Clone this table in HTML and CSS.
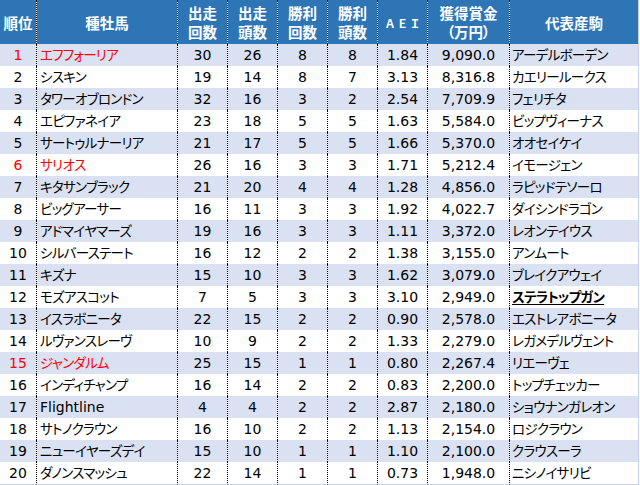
FILE: index.html
```html
<!DOCTYPE html>
<html lang="ja">
<head>
<meta charset="utf-8">
<title>種牡馬ランキング</title>
<link rel="stylesheet" href="styles.css">
</head>
<body>
<table class="rank">
  <colgroup>
    <col class="w-rank"><col class="w-name"><col class="w-num"><col class="w-num"><col class="w-num"><col class="w-num"><col class="w-num"><col class="w-prize"><col class="w-rep">
  </colgroup>
  <thead>
    <tr>
      <th>順位</th>
      <th>種牡馬</th>
      <th>出走<br>回数</th>
      <th>出走<br>頭数</th>
      <th>勝利<br>回数</th>
      <th>勝利<br>頭数</th>
      <th><span class="aei">ＡＥＩ</span></th>
      <th>獲得賞金<br>（万円）</th>
      <th>代表産駒</th>
    </tr>
  </thead>
  <tbody>
    <tr class="hl"><td>1</td><td class="l">エフフォーリア</td><td>30</td><td>26</td><td>8</td><td>8</td><td>1.84</td><td>9,090.0</td><td class="l">アーデルボーデン</td></tr>
    <tr><td>2</td><td class="l">シスキン</td><td>19</td><td>14</td><td>8</td><td>7</td><td>3.13</td><td>8,316.8</td><td class="l">カエリールークス</td></tr>
    <tr><td>3</td><td class="l">タワーオブロンドン</td><td>32</td><td>16</td><td>3</td><td>2</td><td>2.54</td><td>7,709.9</td><td class="l">フェリチタ</td></tr>
    <tr><td>4</td><td class="l">エピファネイア</td><td>23</td><td>18</td><td>5</td><td>5</td><td>1.63</td><td>5,584.0</td><td class="l">ビップヴィーナス</td></tr>
    <tr><td>5</td><td class="l">サートゥルナーリア</td><td>21</td><td>17</td><td>5</td><td>5</td><td>1.66</td><td>5,370.0</td><td class="l">オオセイケイ</td></tr>
    <tr class="hl"><td>6</td><td class="l">サリオス</td><td>26</td><td>16</td><td>3</td><td>3</td><td>1.71</td><td>5,212.4</td><td class="l">イモージェン</td></tr>
    <tr><td>7</td><td class="l">キタサンブラック</td><td>21</td><td>20</td><td>4</td><td>4</td><td>1.28</td><td>4,856.0</td><td class="l">ラピッドテソーロ</td></tr>
    <tr><td>8</td><td class="l">ビッグアーサー</td><td>16</td><td>11</td><td>3</td><td>3</td><td>1.92</td><td>4,022.7</td><td class="l">ダイシンドラゴン</td></tr>
    <tr><td>9</td><td class="l">アドマイヤマーズ</td><td>19</td><td>16</td><td>3</td><td>3</td><td>1.11</td><td>3,372.0</td><td class="l">レオンテイウス</td></tr>
    <tr><td>10</td><td class="l">シルバーステート</td><td>16</td><td>12</td><td>2</td><td>2</td><td>1.38</td><td>3,155.0</td><td class="l">アンムート</td></tr>
    <tr><td>11</td><td class="l">キズナ</td><td>15</td><td>10</td><td>3</td><td>3</td><td>1.62</td><td>3,079.0</td><td class="l">ブレイクアウェイ</td></tr>
    <tr><td>12</td><td class="l">モズアスコット</td><td>7</td><td>5</td><td>3</td><td>3</td><td>3.10</td><td>2,949.0</td><td class="l"><span class="star">ステラトップガン</span></td></tr>
    <tr><td>13</td><td class="l">イスラボニータ</td><td>22</td><td>15</td><td>2</td><td>2</td><td>0.90</td><td>2,578.0</td><td class="l">エストレアボニータ</td></tr>
    <tr><td>14</td><td class="l">ルヴァンスレーヴ</td><td>10</td><td>9</td><td>2</td><td>2</td><td>1.33</td><td>2,279.0</td><td class="l">レガメデルヴェント</td></tr>
    <tr class="hl"><td>15</td><td class="l">ジャンダルム</td><td>25</td><td>15</td><td>1</td><td>1</td><td>0.80</td><td>2,267.4</td><td class="l">リエーヴェ</td></tr>
    <tr><td>16</td><td class="l">インディチャンプ</td><td>16</td><td>14</td><td>2</td><td>2</td><td>0.83</td><td>2,200.0</td><td class="l">トップチェッカー</td></tr>
    <tr><td>17</td><td class="l latin">Flightline</td><td>4</td><td>4</td><td>2</td><td>2</td><td>2.87</td><td>2,180.0</td><td class="l">ショウナンガレオン</td></tr>
    <tr><td>18</td><td class="l">サトノクラウン</td><td>16</td><td>10</td><td>2</td><td>2</td><td>1.13</td><td>2,154.0</td><td class="l">ロジクラウン</td></tr>
    <tr><td>19</td><td class="l">ニューイヤーズデイ</td><td>15</td><td>10</td><td>1</td><td>1</td><td>1.10</td><td>2,100.0</td><td class="l">クラウスーラ</td></tr>
    <tr><td>20</td><td class="l">ダノンスマッシュ</td><td>22</td><td>14</td><td>1</td><td>1</td><td>0.73</td><td>1,948.0</td><td class="l">ニシノイサリビ</td></tr>
  </tbody>
</table>
</body>
</html>
```

FILE: styles.css
```css
html, body {
  margin: 0;
  padding: 0;
  background: #ffffff;
}

.rank {
  table-layout: fixed;
  width: 639px;
  border-collapse: separate;
  border-spacing: 0;
  background: #ffffff;
  font-family: "DejaVu Sans", "Noto Sans CJK JP", sans-serif;
  font-feature-settings: "palt";
  font-size: 14px;
  color: #000000;
}

.w-rank { width: 36px; }
.w-name { width: 141px; }
.w-num { width: 50px; }
.w-prize { width: 82px; }
.w-rep { width: 130px; }

.rank th,
.rank td {
  box-sizing: border-box;
  padding: 0;
  text-align: center;
  vertical-align: middle;
  white-space: nowrap;
  overflow: hidden;
  background-clip: padding-box;
}

.rank th + th,
.rank td + td {
  border-left: 1px dotted #000000;
}

.rank th:last-child,
.rank td:last-child {
  border-right: 1px solid #c9d3ea;
}

.rank th {
  height: 44px;
  background-color: #2e75b6;
  color: #ffffff;
  font-family: "Noto Sans CJK JP", sans-serif;
  font-weight: bold;
  font-size: 14.5px;
  line-height: 19px;
}

.aei {
  font-size: 11px;
  letter-spacing: 4px;
  margin-right: -4px;
}

.rank td {
  height: 22px;
  line-height: 22px;
}

.rank tbody tr:nth-child(odd) td {
  background-color: #d9e1f2;
}

.rank tbody tr:last-child td {
  border-bottom: 1px solid #c9d3ea;
}

.rank td.l {
  text-align: left;
  padding-left: 3px;
  font-size: 13.5px;
  letter-spacing: -0.7px;
}

.rank td.latin {
  font-size: 14px;
  letter-spacing: 0;
}

.rank td:last-child.l {
  padding-left: 2px;
}

.hl td:nth-child(1),
.hl td:nth-child(2) {
  color: #ff0000;
}

.star {
  font-weight: bold;
  text-decoration: underline;
  text-underline-offset: 2px;
}
```
